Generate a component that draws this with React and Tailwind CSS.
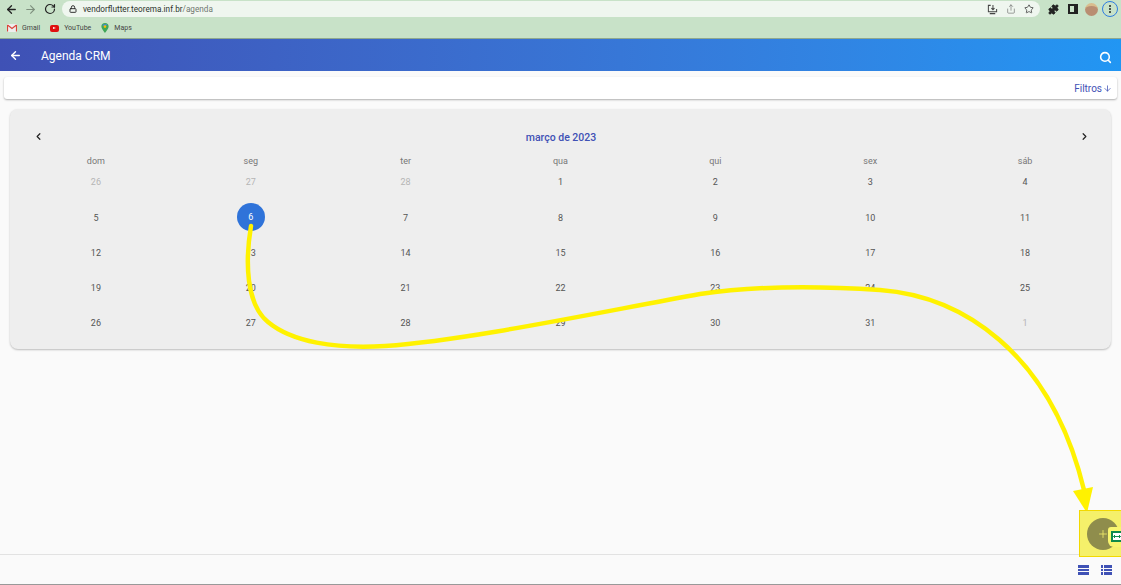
import { ArrowLeft, ArrowRight, RotateCw, Lock, Share, Star, Puzzle, ChevronLeft, ChevronRight, Search, ArrowDown, Plus } from 'lucide-react'

const weekDays = ['dom', 'seg', 'ter', 'qua', 'qui', 'sex', 'sáb']
const days = [
  [['26', 1], ['27', 1], ['28', 1], ['1'], ['2'], ['3'], ['4']],
  [['5'], ['6', 2], ['7'], ['8'], ['9'], ['10'], ['11']],
  [['12'], ['13'], ['14'], ['15'], ['16'], ['17'], ['18']],
  [['19'], ['20'], ['21'], ['22'], ['23'], ['24'], ['25']],
  [['26'], ['27'], ['28'], ['29'], ['30'], ['31'], ['1', 1]],
]

function BrowserBar() {
  return (
    <div className="bg-[#c8e2c8]">
      <div className="h-[18px] flex items-center pl-[4px] pr-[3px]">
        <ArrowLeft size={13} strokeWidth={2.4} className="text-[#222] ml-[1px]" />
        <ArrowRight size={13} strokeWidth={2} className="text-[#7d8f7d] ml-[6px]" />
        <RotateCw size={12} strokeWidth={2.4} className="text-[#222] ml-[7px]" />
        <div className="ml-[6px] w-[979px] h-[16px] rounded-full bg-[#eff6ef] flex items-center pl-[7px] pr-[6px]">
          <Lock size={8} strokeWidth={3} className="text-[#333]" />
          <span className="ml-[6px] text-[8.2px] text-[#2c332c] mt-[1px]">vendorflutter.teorema.inf.br<span className="text-[#6f776f]">/agenda</span></span>
          <div className="ml-auto flex items-center gap-[8px] text-[#444]">
            <svg width="11" height="11" viewBox="0 0 12 12" fill="none" stroke="currentColor" strokeWidth="1.1">
              <path d="M4 1.5H1.5v7h9v-3M6.5 1v5M4.8 4.5l1.7 1.7 1.7-1.7M3 10.5h6" />
            </svg>
            <Share size={10} strokeWidth={1.5} className="text-[#666]" />
            <Star size={10} strokeWidth={2} />
          </div>
        </div>
        <Puzzle size={11} strokeWidth={2} fill="#222" className="text-[#222] ml-[8px]" />
        <div className="ml-[9px] w-[10px] h-[10px] border-2 border-[#222] border-r-[4px]" />
        <div className="ml-[7px] w-[13px] h-[13px] rounded-full bg-[#b98e72] border-t-[3px] border-[#d9bd8e]" />
        <div className="ml-[4px] w-[16px] h-[16px] rounded-full border border-[#2f7de0] flex items-center justify-center">
          <span className="flex flex-col gap-[1px]">
            <i className="block w-[2px] h-[2px] rounded-full bg-[#222]" />
            <i className="block w-[2px] h-[2px] rounded-full bg-[#222]" />
            <i className="block w-[2px] h-[2px] rounded-full bg-[#222]" />
          </span>
        </div>
      </div>
      <div className="h-[21px] pl-[7px] flex items-center text-[7px] text-[#444] border-b border-[#8fa88f]">
        <svg width="10" height="8" viewBox="0 0 10 8">
          <rect width="10" height="8" rx="1" fill="#eee" />
          <path d="M0.5 1 5 4.5 9.5 1" fill="none" stroke="#d9453a" strokeWidth="1.2" />
          <path d="M0.5 1v6.5M9.5 1v6.5" stroke="#d9453a" strokeWidth="1.2" />
        </svg>
        <span className="ml-[5px]">Gmail</span>
        <span className="ml-[10px] w-[9px] h-[7px] rounded-[2px] bg-[#e01010] flex items-center justify-center">
          <i className="block w-0 h-0 border-y-[1.5px] border-y-transparent border-l-[3px] border-l-white" />
        </span>
        <span className="ml-[5px]">YouTube</span>
        <svg className="ml-[10px]" width="8" height="10" viewBox="0 0 8 10">
          <path d="M4 0a3.6 3.6 0 0 0-3.6 3.6C.4 6 4 10 4 10s3.6-4 3.6-6.4A3.6 3.6 0 0 0 4 0z" fill="#3fa757" />
          <path d="M1 1.8 6.5 1 4 4z" fill="#4a86e8" />
          <circle cx="4" cy="3.6" r="1.3" fill="#fbbc04" />
        </svg>
        <span className="ml-[5px]">Maps</span>
      </div>
    </div>
  )
}

function Calendar() {
  return (
    <div className="mx-[10px] mt-[10px] h-[240px] rounded-[8px] bg-[#eeeeee] shadow-[0_1px_2px_rgba(0,0,0,0.25)] px-[8.5px] pt-[21px]">
      <div className="flex items-center justify-between h-[14px] pl-[14px] pr-[19px]">
        <ChevronLeft size={11} strokeWidth={2.6} className="text-[#222] mb-[2px]" />
        <span className="text-[10.5px] font-medium text-[#3f51b5] mt-[1px]">março de 2023</span>
        <ChevronRight size={11} strokeWidth={2.6} className="text-[#222] mb-[2px] -mr-[6px]" />
      </div>
      <div className="grid grid-cols-7 mt-[11px] h-[10.5px] items-center text-center text-[9px] text-[#777]">
        {weekDays.map((d) => <span key={d}>{d}</span>)}
      </div>
      {days.map((week, i) => (
        <div key={i} className="grid grid-cols-7 h-[35.2px] items-center text-center text-[9px] text-[#555]">
          {week.map(([label, kind], j) => (
            <div key={j} className="flex justify-center">
              {kind === 2 ? (
                <span className="w-[28px] h-[28px] mb-[2px] rounded-full bg-[#2f73d9] text-white flex items-center justify-center">{label}</span>
              ) : (
                <span className={kind === 1 ? 'text-[#b5b5b5]' : ''}>{label}</span>
              )}
            </div>
          ))}
        </div>
      ))}
    </div>
  )
}

export default function App() {
  return (
    <div className="relative w-[1121px] h-[585px] overflow-hidden bg-[#fafafa] flex flex-col font-['Roboto',sans-serif]">
      <BrowserBar />

      <div className="h-[32px] shrink-0 bg-gradient-to-r from-[#3f51b5] to-[#2196f3] flex items-center pl-[9px] pr-[9px] text-white">
        <ArrowLeft size={13} strokeWidth={2.6} />
        <span className="ml-[19px] text-[12px] mt-[1px]">Agenda CRM</span>
        <Search size={13} strokeWidth={2.8} className="ml-auto mt-[5px]" />
      </div>

      <div className="mx-[4px] mt-[6px] h-[22px] shrink-0 rounded-[3px] bg-white shadow-[0_1px_2px_rgba(0,0,0,0.3)] flex items-center justify-end pr-[5px] text-[#3f51b5] text-[10px]">
        Filtros
        <ArrowDown size={9} strokeWidth={2} className="ml-[1px] mt-[1px]" />
      </div>

      <Calendar />

      <div className="mt-auto h-[31px] border-t border-[#e2e2e2] border-b border-b-[#999] flex items-center justify-end gap-[12px] pr-[9px]">
        <span className="flex flex-col gap-[1px] mt-[1px]">
          <i className="block w-[11px] h-[2.6px] bg-[#3f51b5]" />
          <i className="block w-[11px] h-[2.6px] bg-[#3f51b5]" />
          <i className="block w-[11px] h-[2.6px] bg-[#3f51b5]" />
        </span>
        <span className="flex flex-col gap-[1px] mt-[1px]">
          {[0, 1, 2].map((n) => (
            <span key={n} className="flex gap-[1px]">
              <i className="block w-[2px] h-[2.6px] bg-[#3f51b5]" />
              <i className="block w-[8px] h-[2.6px] bg-[#3f51b5]" />
            </span>
          ))}
        </span>
      </div>

      {/* anotacao amarela por cima da tela */}
      <svg className="absolute inset-0 pointer-events-none" width="1121" height="585" viewBox="0 0 1121 585" fill="none">
        <path
          d="M251 226C245 262 246 304 268 322C292 342 335 349 385 346C470 340 600 312 700 294C760 285 820 286 880 290C960 296 1050 350 1084 490"
          stroke="#fff200"
          strokeWidth="4.5"
          strokeLinecap="round"
        />
        <path d="M1073 491L1093 487L1087 513Z" fill="#fff200" />
      </svg>

      <div className="absolute left-[1079px] top-[510px] w-[42px] h-[47px] bg-[#f5f06a] border border-r-0 border-[#f2d900]">
        <div className="absolute left-[7px] top-[7px] w-[32px] h-[32px] rounded-full bg-[#8f8d4c] flex items-center justify-center">
          <Plus size={12} strokeWidth={1.6} className="text-[#f5f06a]" />
        </div>
        <div className="absolute left-[28px] top-[16px] w-[13px] h-[20px] rounded-l-[3px] rounded-bl-[6px] bg-[#f8f56f] pl-[3px] pt-[4px]">
          <div className="w-[12px] h-[11px] border-2 border-[#0f8a4a] bg-white flex items-center justify-center">
            <svg width="8" height="5" viewBox="0 0 8 5" fill="none" stroke="#0f8a4a" strokeWidth="1">
              <path d="M0.5 2.5h7M2 1 0.5 2.5 2 4M6 1l1.5 1.5L6 4" />
            </svg>
          </div>
        </div>
      </div>
    </div>
  )
}
